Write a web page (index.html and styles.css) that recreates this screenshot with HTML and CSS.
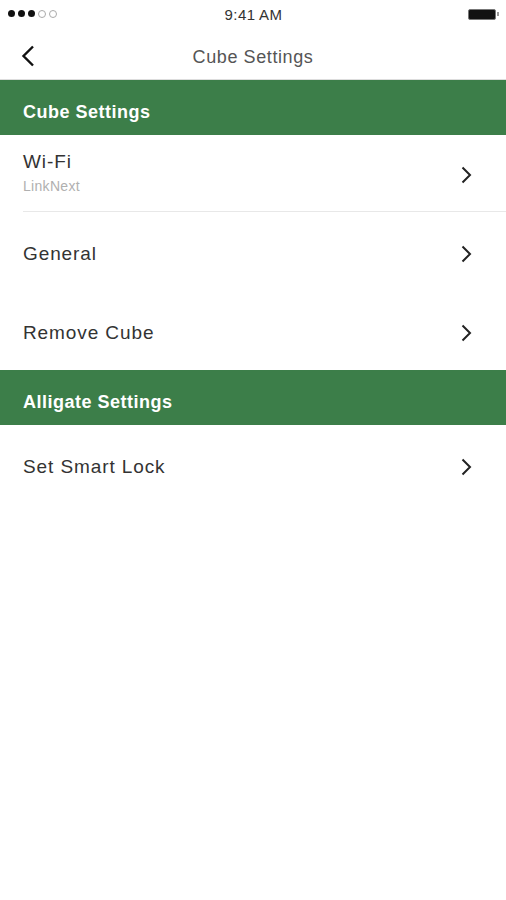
FILE: index.html
```html
<!DOCTYPE html>
<html lang="en">
<head>
  <meta charset="UTF-8">
  <meta name="viewport" content="width=device-width, initial-scale=1.0">
  <title>Cube Settings</title>
  <link rel="stylesheet" href="styles.css">
</head>
<body>

  <div class="status-bar">
    <div class="signal">
      <span class="dot"></span><span class="dot"></span><span class="dot"></span>
      <span class="dot empty"></span><span class="dot empty"></span>
    </div>
    <div class="time">9:41 AM</div>
    <div class="battery"><span class="battery-body"></span><span class="battery-tip"></span></div>
  </div>

  <div class="nav-bar">
    <svg class="back" width="14" height="22" viewBox="0 0 14 22">
      <path d="M12 1.5 L2.5 11 L12 20.5" fill="none" stroke="#111" stroke-width="2.4"/>
    </svg>
    <div class="nav-title">Cube Settings</div>
  </div>

  <div class="section-header">Cube Settings</div>

  <div class="row row-wifi">
    <div class="row-text">
      <div class="row-label">Wi-Fi</div>
      <div class="row-sub">LinkNext</div>
    </div>
    <svg class="chevron" width="11" height="18" viewBox="0 0 11 18">
      <path d="M1.5 1.5 L9 9 L1.5 16.5" fill="none" stroke="#222" stroke-width="2"/>
    </svg>
  </div>
  <div class="divider"></div>

  <div class="row">
    <div class="row-label">General</div>
    <svg class="chevron" width="11" height="18" viewBox="0 0 11 18">
      <path d="M1.5 1.5 L9 9 L1.5 16.5" fill="none" stroke="#222" stroke-width="2"/>
    </svg>
  </div>

  <div class="row">
    <div class="row-label">Remove Cube</div>
    <svg class="chevron" width="11" height="18" viewBox="0 0 11 18">
      <path d="M1.5 1.5 L9 9 L1.5 16.5" fill="none" stroke="#222" stroke-width="2"/>
    </svg>
  </div>

  <div class="section-header">Alligate Settings</div>

  <div class="row">
    <div class="row-label">Set Smart Lock</div>
    <svg class="chevron" width="11" height="18" viewBox="0 0 11 18">
      <path d="M1.5 1.5 L9 9 L1.5 16.5" fill="none" stroke="#222" stroke-width="2"/>
    </svg>
  </div>

</body>
</html>
```

FILE: styles.css
```css
body {
  margin: 0;
  font-family: "Liberation Sans", Arial, sans-serif;
  background-color: #fff;
  color: #333;
}
.status-bar {
  height: 28px;
  display: flex;
  align-items: center;
  justify-content: space-between;
  padding: 0 7px 0 8px;
}
.signal {
  display: flex;
  gap: 3px;
  width: 60px;
}
.dot {
  width: 7px;
  height: 7px;
  border-radius: 50%;
  background-color: #111;
}
.dot.empty {
  width: 6px;
  height: 6px;
  background: none;
  border: 1px solid #aaa;
  margin-top: -0.5px;
}
.time {
  font-size: 15px;
  letter-spacing: 0.4px;
  color: #333;
}
.battery {
  width: 60px;
  display: flex;
  align-items: center;
  justify-content: flex-end;
}
.battery-body {
  width: 26px;
  height: 9px;
  background-color: #111;
  border: 1px solid #777;
  border-radius: 2px;
}
.battery-tip {
  width: 2px;
  height: 4px;
  margin-left: 1px;
  background-color: #999;
}
.nav-bar {
  height: 52px;
  display: flex;
  align-items: center;
  justify-content: center;
  position: relative;
  padding-top: 8px;
  box-sizing: border-box;
  border-bottom: 1px solid #ddd;
}
.back {
  position: absolute;
  left: 21px;
  top: 17px;
}
.nav-title {
  font-size: 18px;
  letter-spacing: 0.6px;
  color: #555;
}
.section-header {
  height: 55px;
  display: flex;
  align-items: center;
  padding: 10px 0 0 23px;
  box-sizing: border-box;
  background-color: #3c7e49;
  color: #fff;
  font-size: 18px;
  font-weight: bold;
  letter-spacing: 0.5px;
}
.section-header + .section-header {
  height: 54px;
}
.row {
  height: 79px;
  display: flex;
  align-items: center;
  justify-content: space-between;
  padding: 5px 34px 0 23px;
  box-sizing: border-box;
}
.row-wifi {
  height: 76px;
  padding-top: 0;
}
.row-label {
  font-size: 19px;
  letter-spacing: 0.9px;
  color: #333;
}
.row-wifi .row-label {
  margin-top: -2px;
}
.row-sub {
  margin-top: 5px;
  font-size: 14px;
  letter-spacing: 0.3px;
  color: #b0b0b0;
}
.row-wifi .chevron {
  margin-top: 4px;
}
.divider {
  height: 1px;
  margin-left: 23px;
  background-color: #e8e8e8;
}
```
